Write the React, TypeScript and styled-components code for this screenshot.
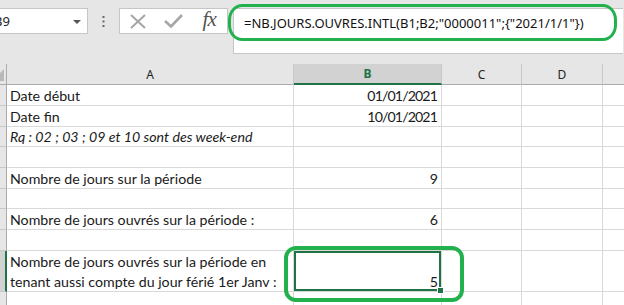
import styled, { createGlobalStyle } from "styled-components";

const GlobalStyle = createGlobalStyle`
  html, body { margin: 0; padding: 0; background: #fff; }
  body { width: 624px; height: 305px; overflow: hidden; }
`;

const Page = styled.div`
  position: relative;
  width: 624px;
  height: 305px;
  overflow: hidden;
  background: #e6e6e6;
`;

const FormulaBar = styled.div`
  display: flex;
  align-items: flex-start;
  height: 64px;
  padding-top: 8px;
  box-sizing: border-box;
`;

const NameBox = styled.div`
  width: 98px;
  height: 26px;
  margin-left: -10px;
  box-sizing: border-box;
  background: #fff;
  border: 1px solid #c6c6c6;
  display: flex;
  align-items: center;
  justify-content: space-between;
  padding: 0 6px 0 3px;
  font: 13px "Noto Sans", sans-serif;
  color: #222;
`;

const Arrow = styled.span`
  width: 0;
  height: 0;
  border-left: 4px solid transparent;
  border-right: 4px solid transparent;
  border-top: 4px solid #555;
  margin-top: 1px;
`;

const Grip = styled.div`
  width: 31px;
  height: 26px;
  display: flex;
  align-items: center;
  justify-content: center;
`;

const ToolBox = styled.div`
  width: 109px;
  height: 26px;
  box-sizing: border-box;
  background: #fff;
  border: 1px solid #c6c6c6;
  display: flex;
  align-items: center;
`;

const ToolIcon = styled.div`
  width: 36px;
  height: 24px;
  display: flex;
  align-items: center;
  justify-content: center;
`;

const Fx = styled.span`
  font: italic 21px "Liberation Serif", serif;
  color: #555;
  letter-spacing: -1px;
  margin-top: -3px;
`;

const FormulaInput = styled.div`
  margin-left: 5px;
  width: 390px;
  height: 46px;
  box-sizing: border-box;
  background: #fff;
  border: 1px solid #c6c6c6;
  border-right: none;
  padding: 5px 0 0 10px;
  font: 13px "Noto Sans", sans-serif;
  color: #111;
  white-space: nowrap;
`;

const Sheet = styled.div<{ $rows: string }>`
  display: grid;
  grid-template-columns: 36px 287px 148px 80px 81px 60px;
  grid-template-rows: 21px ${(p) => p.$rows};
  margin-left: -29px;
  background: #fff;
`;

const ColHead = styled.div<{ $selected?: boolean }>`
  box-sizing: border-box;
  background: ${(p) => (p.$selected ? "#d2d2d2" : "#e6e6e6")};
  border-right: 1px solid #c8c8c8;
  border-bottom: ${(p) => (p.$selected ? "2px solid #217346" : "1px solid #ababab")};
  display: flex;
  align-items: center;
  justify-content: center;
  font: ${(p) => (p.$selected ? "bold" : "normal")} 12px "Noto Sans", sans-serif;
  color: ${(p) => (p.$selected ? "#217346" : "#222")};
`;

const Corner = styled.div`
  position: relative;
  box-sizing: border-box;
  background: #e6e6e6;
  border-right: 1px solid #ababab;
  border-bottom: 1px solid #ababab;
  &::after {
    content: "";
    position: absolute;
    right: 2px;
    bottom: 3px;
    border-left: 12px solid transparent;
    border-bottom: 12px solid #b9b9b9;
  }
`;

const RowHead = styled.div<{ $selected?: boolean }>`
  box-sizing: border-box;
  background: ${(p) => (p.$selected ? "#d2d2d2" : "#e6e6e6")};
  border-right: ${(p) => (p.$selected ? "2px solid #217346" : "1px solid #ababab")};
  border-bottom: 1px solid #c8c8c8;
  display: flex;
  align-items: flex-end;
  justify-content: center;
  padding-bottom: 2px;
  font: 12px "Noto Sans", sans-serif;
  color: #222;
  overflow: hidden;
`;

const Cell = styled.div<{ $align?: "left" | "right"; $italic?: boolean; $active?: boolean }>`
  position: relative;
  box-sizing: border-box;
  border-right: 1px solid #d9d9d9;
  border-bottom: 1px solid #d9d9d9;
  display: flex;
  align-items: flex-end;
  justify-content: ${(p) => (p.$align === "right" ? "flex-end" : "flex-start")};
  padding: 0 4px 0 3px;
  font: ${(p) => (p.$italic ? "italic" : "normal")} 14.2px Lato, "Liberation Sans", sans-serif;
  letter-spacing: ${(p) => (p.$align === "right" ? "-0.9px" : "0")};
  line-height: 20px;
  color: #1a1a1a;
  white-space: nowrap;
  box-shadow: ${(p) => (p.$active ? "inset 0 0 0 2px #217346" : "none")};
`;

const CellText = styled.span`
  margin-bottom: -1px;
`;

const FillHandle = styled.span`
  position: absolute;
  right: -3px;
  bottom: -3px;
  width: 5px;
  height: 5px;
  background: #217346;
  border: 1px solid #fff;
  z-index: 2;
`;

const Highlight = styled.div<{ $x: number; $y: number; $w: number; $h: number; $bw: number; $r: string }>`
  position: absolute;
  left: ${(p) => p.$x}px;
  top: ${(p) => p.$y}px;
  width: ${(p) => p.$w}px;
  height: ${(p) => p.$h}px;
  box-sizing: border-box;
  border: ${(p) => p.$bw}px solid #22b14c;
  border-radius: ${(p) => p.$r};
  pointer-events: none;
  z-index: 3;
`;

type Row = {
  n: number;
  h: number;
  a?: React.ReactNode;
  b?: string;
  italic?: boolean;
  active?: boolean;
};

const rows: Row[] = [
  { n: 1, h: 21, a: "Date début", b: "01/01/2021" },
  { n: 2, h: 21, a: "Date fin", b: "10/01/2021" },
  { n: 3, h: 20, a: "Rq : 02 ; 03 ; 09 et 10 sont des week-end", italic: true },
  { n: 4, h: 21 },
  { n: 5, h: 21, a: "Nombre de jours sur la période", b: "9" },
  { n: 6, h: 20 },
  { n: 7, h: 21, a: "Nombre de jours ouvrés sur la période :", b: "6" },
  { n: 8, h: 21 },
  {
    n: 9,
    h: 41,
    a: (
      <>
        Nombre de jours ouvrés sur la période en
        <br />
        tenant aussi compte du jour férié 1er Janv :
      </>
    ),
    b: "5",
    active: true,
  },
  { n: 10, h: 30 },
];

const columns = ["A", "B", "C", "D", ""];

export default function App() {
  return (
    <>
      <GlobalStyle />
      <Page>
        <FormulaBar>
          <NameBox>
            <span>B9</span>
            <Arrow />
          </NameBox>
          <Grip>
            <svg width="3" height="11" viewBox="0 0 3 11">
              <rect x="0.5" y="0" width="2" height="2" fill="#666" />
              <rect x="0.5" y="4.5" width="2" height="2" fill="#666" />
              <rect x="0.5" y="9" width="2" height="2" fill="#666" />
            </svg>
          </Grip>
          <ToolBox>
            <ToolIcon>
              <svg width="16" height="15" viewBox="0 0 16 15">
                <path d="M1 1 L15 14 M15 1 L1 14" stroke="#a6a6a6" strokeWidth="2" fill="none" />
              </svg>
            </ToolIcon>
            <ToolIcon>
              <svg width="19" height="14" viewBox="0 0 19 14">
                <path d="M1 7 L7 12.5 L18 1" stroke="#a6a6a6" strokeWidth="2.6" fill="none" />
              </svg>
            </ToolIcon>
            <ToolIcon>
              <Fx>fx</Fx>
            </ToolIcon>
          </ToolBox>
          <FormulaInput>=NB.JOURS.OUVRES.INTL(B1;B2;"0000011";{"{"}"2021/1/1"{"}"})</FormulaInput>
        </FormulaBar>

        <Sheet $rows={rows.map((r) => `${r.h}px`).join(" ")}>
          <Corner />
          {columns.map((c, i) => (
            <ColHead key={i} $selected={c === "B"}>
              {c}
            </ColHead>
          ))}
          {rows.map((r) => (
            <SheetRow key={r.n} row={r} />
          ))}
        </Sheet>

        <Highlight $x={228} $y={4} $w={389} $h={37} $bw={3} $r="14px / 16px" />
        <Highlight $x={284} $y={246} $w={180} $h={56} $bw={4} $r="12px" />
      </Page>
    </>
  );
}

function SheetRow({ row }: { row: Row }) {
  return (
    <>
      <RowHead $selected={row.active}>{row.n}</RowHead>
      <Cell $italic={row.italic}>{row.a && <CellText>{row.a}</CellText>}</Cell>
      <Cell $align="right" $active={row.active}>
        {row.b && <CellText>{row.b}</CellText>}
        {row.active && <FillHandle />}
      </Cell>
      <Cell />
      <Cell />
      <Cell />
    </>
  );
}
